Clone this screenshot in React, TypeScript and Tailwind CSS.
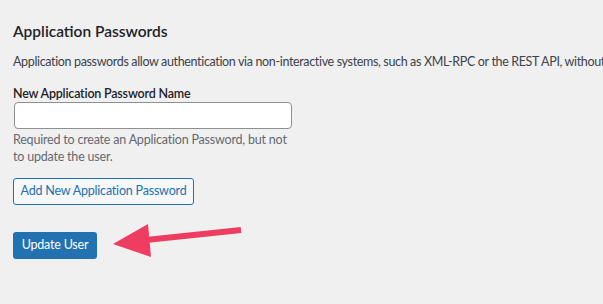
import React from "react";

const ArrowPointer = () => (
  <svg
    className="absolute left-0 top-0 pointer-events-none"
    width="603"
    height="304"
    viewBox="0 0 603 304"
  >
    <line x1="146" y1="240" x2="241" y2="230" stroke="#ee3d60" strokeWidth="6" />
    <polygon points="113,244 148,224 151,257" fill="#ee3d60" />
  </svg>
);

const App = () => {
  return (
    <div
      className="relative w-[603px] h-[304px] overflow-hidden bg-[#f0f0f1] pl-[13px] tracking-[-0.2px]"
      style={{ fontFamily: 'Lato, "Liberation Sans", sans-serif' }}
    >
      <h2 className="mt-[21px] text-[15.5px] leading-[20px] font-semibold tracking-normal text-[#1d2327]">
        Application Passwords
      </h2>
      <p className="mt-[11px] text-[12.5px] leading-[20px] tracking-[-0.35px] text-[#3c434a] whitespace-nowrap">
        Application passwords allow authentication via non-interactive systems, such as XML-RPC or the REST API, without
        providing your actual password.
      </p>
      <label className="block mt-[14px] text-[12.5px] leading-[16px] font-semibold text-[#1d2327]">
        New Application Password Name
      </label>
      <input
        type="text"
        className="block ml-[1px] w-[278px] h-[27px] bg-white border border-[#8c8f94] rounded-[4px]"
      />
      <p className="mt-[2px] text-[12.5px] leading-[17px] text-[#646970] whitespace-nowrap">
        Required to create an Application Password, but not
        <br />
        to update the user.
      </p>
      <button className="mt-[13px] flex items-center justify-center w-[181px] h-[27px] border border-[#2271b1] rounded-[3px] bg-[#f6f7f7] text-[12.5px] text-[#2271b1] whitespace-nowrap">
        Add New Application Password
      </button>
      <button className="mt-[27px] flex items-center justify-center w-[84px] h-[27px] rounded-[3px] bg-[#2271b1] text-[12.5px] text-white whitespace-nowrap">
        Update User
      </button>
      <ArrowPointer />
    </div>
  );
};

export default App;
